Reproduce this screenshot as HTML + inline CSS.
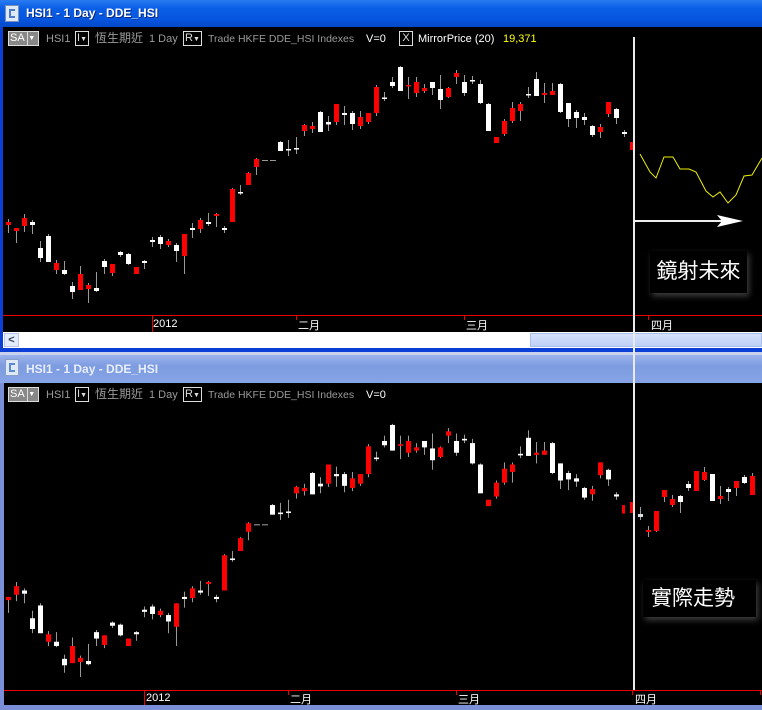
<!DOCTYPE html>
<html><head><meta charset="utf-8">
<style>
*{margin:0;padding:0;box-sizing:border-box}
body{width:762px;height:710px;overflow:hidden;background:#000;position:relative;font-family:"Liberation Sans","Noto Sans CJK TC",sans-serif}
.abs{position:absolute}
.tb{font-size:11px;color:#9a9a9a;white-space:nowrap;line-height:14px}
.box{border:1px solid #ddd;color:#ddd;height:15px;line-height:13px;font-size:11px;padding:0 1px}
.title{font-family:"Liberation Sans",sans-serif;font-weight:bold;font-size:12px;color:#fff;white-space:nowrap}
.lab{font-size:11px;color:#fff;white-space:nowrap}
</style></head><body>
<!-- top window -->
<div class="abs" style="left:0;top:0;width:762px;height:27px;background:linear-gradient(#2a7bf0,#0a5fe6 30%,#0656e0 70%,#0449c8)"></div>
<div class="abs" style="left:5px;top:5px;width:14px;height:17px;background:#dfe8f6;border:1px solid #7a8fb8"></div>
<div class="abs" style="left:9px;top:9px;width:6px;height:9px;border:2px solid #4a7ac8;border-right:none"></div>
<div class="abs title" style="left:26px;top:6px;text-shadow:1px 1px 0 #0a2a80">HSI1 - 1 Day - DDE_HSI</div>
<div class="abs" style="left:0;top:27px;width:3px;height:325px;background:#0b3fd6"></div>
<div class="abs" style="left:0;top:348px;width:762px;height:4px;background:#0b3fd6"></div>
<!-- top toolbar -->
<div class="abs box" style="left:8px;top:31px;width:31px;background:#888;color:#fff">SA<span style="display:inline-block;width:9px;border-left:1px solid #ddd;margin-left:2px;font-size:7px;text-align:center;vertical-align:top">▼</span></div>
<div class="abs tb" style="left:46px;top:32px">HSI1</div>
<div class="abs box" style="left:75px;top:31px;width:14px">I<span style="font-size:7px">▼</span></div>
<div class="abs tb" style="left:95px;top:31px;font-size:12px">恆生期近</div>
<div class="abs tb" style="left:149px;top:32px">1 Day</div>
<div class="abs box" style="left:183px;top:31px;width:19px">R<span style="font-size:7px">▼</span></div>
<div class="abs tb" style="left:208px;top:32px;font-size:10.5px">Trade HKFE DDE_HSI Indexes</div>
<div class="abs tb" style="left:366px;top:32px;color:#fff">V=0</div>
<div class="abs box" style="left:399px;top:31px;width:14px;text-align:center">X</div>
<div class="abs tb" style="left:418px;top:32px;color:#fff">MirrorPrice (20)</div>
<div class="abs tb" style="left:503px;top:32px;color:#ff0">19,371</div>
<!-- top axis -->
<div class="abs" style="left:3px;top:315px;width:759px;height:1px;background:#e00"></div>
<div class="abs" style="left:152px;top:315px;width:1px;height:17px;background:#e00"></div>
<div class="abs" style="left:296px;top:315px;width:1px;height:5px;background:#e00"></div>
<div class="abs" style="left:464px;top:315px;width:1px;height:5px;background:#e00"></div>
<div class="abs" style="left:648px;top:315px;width:1px;height:5px;background:#e00"></div>
<div class="abs lab" style="left:153px;top:318px">2012</div>
<div class="abs lab" style="left:298px;top:317px">二月</div>
<div class="abs lab" style="left:466px;top:317px">三月</div>
<div class="abs lab" style="left:651px;top:317px">四月</div>
<!-- scrollbar -->
<div class="abs" style="left:3px;top:332px;width:759px;height:16px;background:#fff"></div>
<div class="abs" style="left:4px;top:333px;width:15px;height:14px;background:#e4ecfb;border:1px solid #b8c8ec;color:#345;font-size:11px;line-height:12px;text-align:center;font-weight:bold">&lt;</div>
<div class="abs" style="left:530px;top:333px;width:232px;height:14px;background:linear-gradient(#d6e2fb,#bcd0f6);border:1px solid #a8bff0"></div>
<!-- bottom window -->
<div class="abs" style="left:0;top:352px;width:762px;height:3px;background:#c8d2ee"></div>
<div class="abs" style="left:0;top:355px;width:762px;height:28px;background:linear-gradient(#9cb4ec,#7d9be0 40%,#86a4e6)"></div>
<div class="abs" style="left:5px;top:359px;width:14px;height:17px;background:#dfe8f6;border:1px solid #8a9fc8"></div>
<div class="abs" style="left:9px;top:363px;width:6px;height:9px;border:2px solid #5a8ad0;border-right:none"></div>
<div class="abs title" style="left:26px;top:362px;color:#e8eefc">HSI1 - 1 Day - DDE_HSI</div>
<div class="abs" style="left:0;top:383px;width:4px;height:327px;background:#7b8fd8"></div>
<div class="abs" style="left:0;top:705px;width:762px;height:5px;background:#7b8fd8"></div>
<!-- bottom toolbar -->
<div class="abs box" style="left:8px;top:387px;width:31px;background:#888;color:#fff">SA<span style="display:inline-block;width:9px;border-left:1px solid #ddd;margin-left:2px;font-size:7px;text-align:center;vertical-align:top">▼</span></div>
<div class="abs tb" style="left:46px;top:388px">HSI1</div>
<div class="abs box" style="left:75px;top:387px;width:14px">I<span style="font-size:7px">▼</span></div>
<div class="abs tb" style="left:95px;top:387px;font-size:12px">恆生期近</div>
<div class="abs tb" style="left:149px;top:388px">1 Day</div>
<div class="abs box" style="left:183px;top:387px;width:19px">R<span style="font-size:7px">▼</span></div>
<div class="abs tb" style="left:208px;top:388px;font-size:10.5px">Trade HKFE DDE_HSI Indexes</div>
<div class="abs tb" style="left:366px;top:388px;color:#fff">V=0</div>
<!-- bottom axis -->
<div class="abs" style="left:4px;top:690px;width:758px;height:1px;background:#e00"></div>
<div class="abs" style="left:144px;top:690px;width:1px;height:15px;background:#e00"></div>
<div class="abs" style="left:288px;top:690px;width:1px;height:5px;background:#e00"></div>
<div class="abs" style="left:456px;top:690px;width:1px;height:5px;background:#e00"></div>
<div class="abs" style="left:632px;top:690px;width:1px;height:5px;background:#e00"></div>
<div class="abs" style="left:760px;top:690px;width:1px;height:5px;background:#e00"></div>
<div class="abs lab" style="left:146px;top:692px">2012</div>
<div class="abs lab" style="left:290px;top:691px">二月</div>
<div class="abs lab" style="left:458px;top:691px">三月</div>
<div class="abs lab" style="left:635px;top:691px">四月</div>

<svg class="abs" style="left:0;top:0" width="762" height="710" viewBox="0 0 762 710">
<defs><clipPath id="cb"><rect x="4" y="405" width="758" height="284"/></clipPath></defs>
<g id="c">
<path stroke="#9a9a9a" stroke-width="1" fill="none" d="M8.5 219V233M16.5 228V243M24.5 214V232M32.5 220V234M40.5 241V262M48.5 234V262M56.5 260V274M64.5 261V275M72.5 282V299M80.5 266V290M88.5 283V303M96.5 272V292M104.5 259V274M112.5 264V276M120.5 251V257M128.5 253V265M144.5 260V269M152.5 237V247M160.5 235V249M168.5 239V247M176.5 243V262M184.5 234V274M192.5 223V238M200.5 218V233M208.5 213V226M216.5 213V227M224.5 226V233M232.5 188V222M240.5 185V195M248.5 172V185M256.5 158V175M280.5 141V151M288.5 140V156M296.5 137V154M304.5 124V136M312.5 122V133M320.5 111V132M328.5 116V131M336.5 104V125M344.5 106V125M352.5 111V130M360.5 111V129M368.5 113V124M376.5 85V116M384.5 92V101M392.5 77V88M400.5 66V91M408.5 77V99M416.5 77V97M424.5 84V93M432.5 82V95M440.5 75V109M448.5 87V98M456.5 70V84M464.5 75V96M472.5 76V84M480.5 80V104M488.5 103V131M504.5 119V136M512.5 102V123M520.5 102V121M528.5 87V98M536.5 72V96M544.5 83V103M552.5 83V95M560.5 83V113M568.5 103V127M576.5 110V128M584.5 113V125M592.5 125V137M600.5 124V138M608.5 102V117M616.5 108V124M624.5 130V137"/>
<g fill="#f00">
<rect x="6" y="222" width="5" height="3"/><rect x="14" y="228" width="5" height="3"/><rect x="22" y="218" width="5" height="8"/><rect x="54" y="263" width="5" height="7"/><rect x="78" y="274" width="5" height="16"/><rect x="86" y="285" width="5" height="4"/><rect x="110" y="264" width="5" height="9"/><rect x="134" y="267" width="5" height="7"/><rect x="166" y="241" width="5" height="4"/><rect x="182" y="234" width="5" height="22"/><rect x="198" y="220" width="5" height="9"/><rect x="214" y="214" width="5" height="2"/><rect x="230" y="189" width="5" height="33"/><rect x="246" y="173" width="5" height="12"/><rect x="254" y="159" width="5" height="8"/><rect x="302" y="125" width="5" height="6"/><rect x="310" y="126" width="5" height="3"/><rect x="334" y="104" width="5" height="18"/><rect x="358" y="117" width="5" height="9"/><rect x="366" y="113" width="5" height="9"/><rect x="374" y="87" width="5" height="26"/><rect x="406" y="85" width="5" height="1.5"/><rect x="414" y="82" width="5" height="11"/><rect x="422" y="88" width="5" height="3"/><rect x="446" y="88" width="5" height="9"/><rect x="454" y="73" width="5" height="4"/><rect x="494" y="137" width="5" height="6"/><rect x="502" y="121" width="5" height="13"/><rect x="510" y="108" width="5" height="13"/><rect x="518" y="104" width="5" height="7"/><rect x="542" y="93" width="5" height="2"/><rect x="550" y="91" width="5" height="4"/><rect x="598" y="127" width="5" height="5"/><rect x="606" y="102" width="5" height="12"/><rect x="630" y="142" width="3" height="8"/>
</g>
<g fill="#fff">
<rect x="30" y="222" width="5" height="3"/><rect x="38" y="248" width="5" height="10"/><rect x="46" y="236" width="5" height="26"/><rect x="62" y="270" width="5" height="4"/><rect x="70" y="286" width="5" height="6"/><rect x="94" y="288" width="5" height="3"/><rect x="102" y="261" width="5" height="6"/><rect x="118" y="252" width="5" height="3"/><rect x="126" y="254" width="5" height="10"/><rect x="142" y="261" width="5" height="2"/><rect x="150" y="240" width="5" height="2"/><rect x="158" y="237" width="5" height="7"/><rect x="174" y="245" width="5" height="6"/><rect x="190" y="228" width="5" height="2"/><rect x="206" y="222" width="5" height="2"/><rect x="222" y="228" width="5" height="2"/><rect x="238" y="192" width="5" height="1.5"/><rect x="278" y="142" width="5" height="9"/><rect x="286" y="149" width="5" height="1.5"/><rect x="294" y="148" width="5" height="1.5"/><rect x="318" y="112" width="5" height="20"/><rect x="326" y="122" width="5" height="2.5"/><rect x="342" y="113" width="5" height="2"/><rect x="350" y="113" width="5" height="11"/><rect x="382" y="97.5" width="5" height="1.5"/><rect x="390" y="82" width="5" height="4"/><rect x="398" y="67" width="5" height="24"/><rect x="430" y="82" width="5" height="6"/><rect x="438" y="89" width="5" height="11"/><rect x="462" y="82" width="5" height="11"/><rect x="470" y="80" width="5" height="1.5"/><rect x="478" y="84" width="5" height="19"/><rect x="486" y="104" width="5" height="27"/><rect x="526" y="94" width="5" height="1.5"/><rect x="534" y="79" width="5" height="17"/><rect x="558" y="84" width="5" height="28"/><rect x="566" y="103" width="5" height="16"/><rect x="574" y="112" width="5" height="6"/><rect x="582" y="117" width="5" height="3"/><rect x="590" y="126" width="5" height="9"/><rect x="614" y="109" width="5" height="9"/><rect x="622" y="132" width="5" height="2"/>
</g>
<g fill="#999"><rect x="262" y="160" width="6" height="1"/><rect x="270" y="160" width="6" height="1"/></g>
</g>
<g clip-path="url(#cb)"><use href="#c" transform="translate(-8,353.4) scale(1,1.068)"/></g>
<path stroke="#9a9a9a" fill="none" d="M640.5 507V520M648.5 526V537M656.5 511V532M664.5 490V502M672.5 495V507M680.5 495V513M688.5 481V491M696.5 471V491M704.5 467V481M712.5 474V501M720.5 486V504M728.5 487V501M736.5 481V496M744.5 475V484M752.5 473V495"/>
<g fill="#f00"><rect x="630" y="502" width="3" height="11"/><rect x="646" y="530" width="5" height="2"/><rect x="654" y="511" width="5" height="20"/><rect x="662" y="490" width="5" height="7"/><rect x="670" y="499" width="5" height="6"/><rect x="694" y="471" width="5" height="20"/><rect x="702" y="472" width="5" height="8"/><rect x="718" y="496" width="5" height="3"/><rect x="734" y="481" width="5" height="7"/><rect x="750" y="476" width="5" height="19"/></g>
<g fill="#fff"><rect x="638" y="514" width="5" height="3" fill="#ddd"/><rect x="678" y="496" width="5" height="6"/><rect x="686" y="484" width="5" height="4"/><rect x="710" y="474" width="5" height="27"/><rect x="726" y="489" width="5" height="3"/><rect x="742" y="477" width="5" height="6"/></g>
<polyline fill="none" stroke="#ee0" stroke-width="1" points="640,154 650,172 656,178 664,157 673,157 680,169 689,169 696,172 706,191 713,197 720,192 728,203 736,195 744,176 752,175 762,158"/>
<rect x="635" y="220" width="88" height="2" fill="#eee"/>
<polygon points="717,215 743,221 717,227 722,221" fill="#fff"/>
<rect x="633" y="37" width="2" height="653" fill="#eaeaea"/>
</svg>
<div class="abs" style="left:650px;top:251px;width:97px;height:42px;background:#000;box-shadow:2px 3px 6px rgba(255,255,255,0.25);color:#fff;font-size:21px;line-height:42px;text-align:center;font-family:'Liberation Sans','Noto Sans CJK TC',sans-serif">鏡射未來</div>
<div class="abs" style="left:643px;top:580px;width:113px;height:37px;background:#000;box-shadow:2px 3px 6px rgba(255,255,255,0.25);color:#fff;font-size:21px;line-height:37px;padding-left:8px;font-family:'Liberation Sans','Noto Sans CJK TC',sans-serif">實際走勢</div>
</body></html>
